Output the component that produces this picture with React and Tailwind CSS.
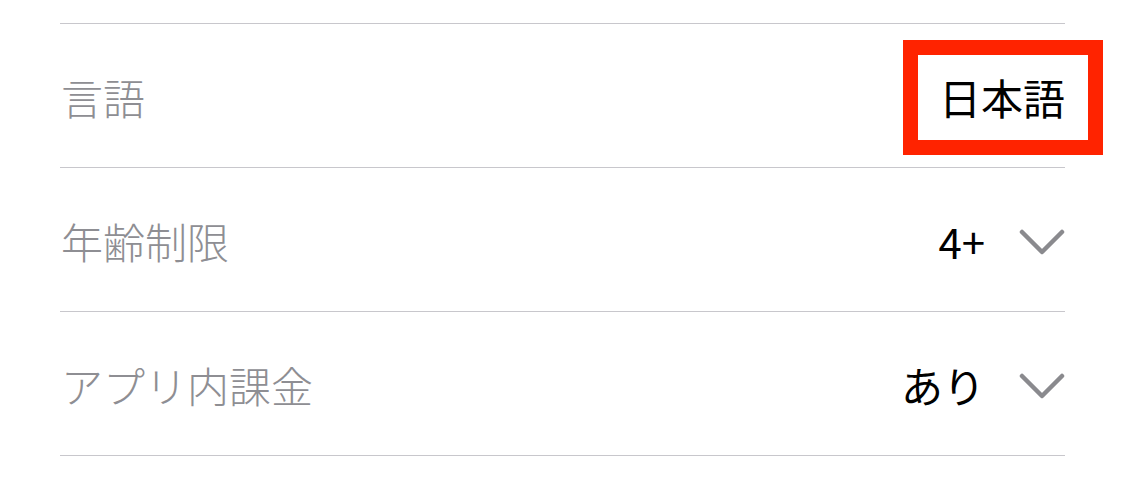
import React from 'react';

const rows = [
  { label: '言語', value: '日本語', marked: true },
  { label: '年齢制限', value: '4+', chevron: true },
  { label: 'アプリ内課金', value: 'あり', chevron: true },
];

const Chevron = () => (
  <svg width="46" height="26" viewBox="0 0 46 26" fill="none" className="ml-[34px] mt-[2px]">
    <polyline points="3,3 23,23 43,3" stroke="#8a8a8e" strokeWidth="4.5" strokeLinecap="round" strokeLinejoin="round" />
  </svg>
);

export default function App() {
  return (
    <div
      className="w-[1125px] h-[482px] bg-white overflow-hidden pt-[23px] px-[60px]"
      style={{ fontFamily: '"Noto Sans CJK JP", "Noto Sans", sans-serif' }}
    >
      <div className="border-b border-[#c8c7cc]">
        {rows.map((row) => (
          <div
            key={row.label}
            className="relative h-[144px] border-t border-[#c8c7cc] flex items-center justify-between pt-[3px]"
          >
            <span className="text-[42px] leading-none font-light text-[#8e8e93] pl-[1px]">{row.label}</span>
            <div className="flex items-center">
              <span className="text-[42px] leading-none font-normal text-black">{row.value}</span>
              {row.chevron && <Chevron />}
            </div>
            {row.marked && (
              <div className="absolute right-[-38px] top-[16px] w-[200px] h-[115px] border-[15px] border-[#ff2300]" />
            )}
          </div>
        ))}
      </div>
    </div>
  );
}
